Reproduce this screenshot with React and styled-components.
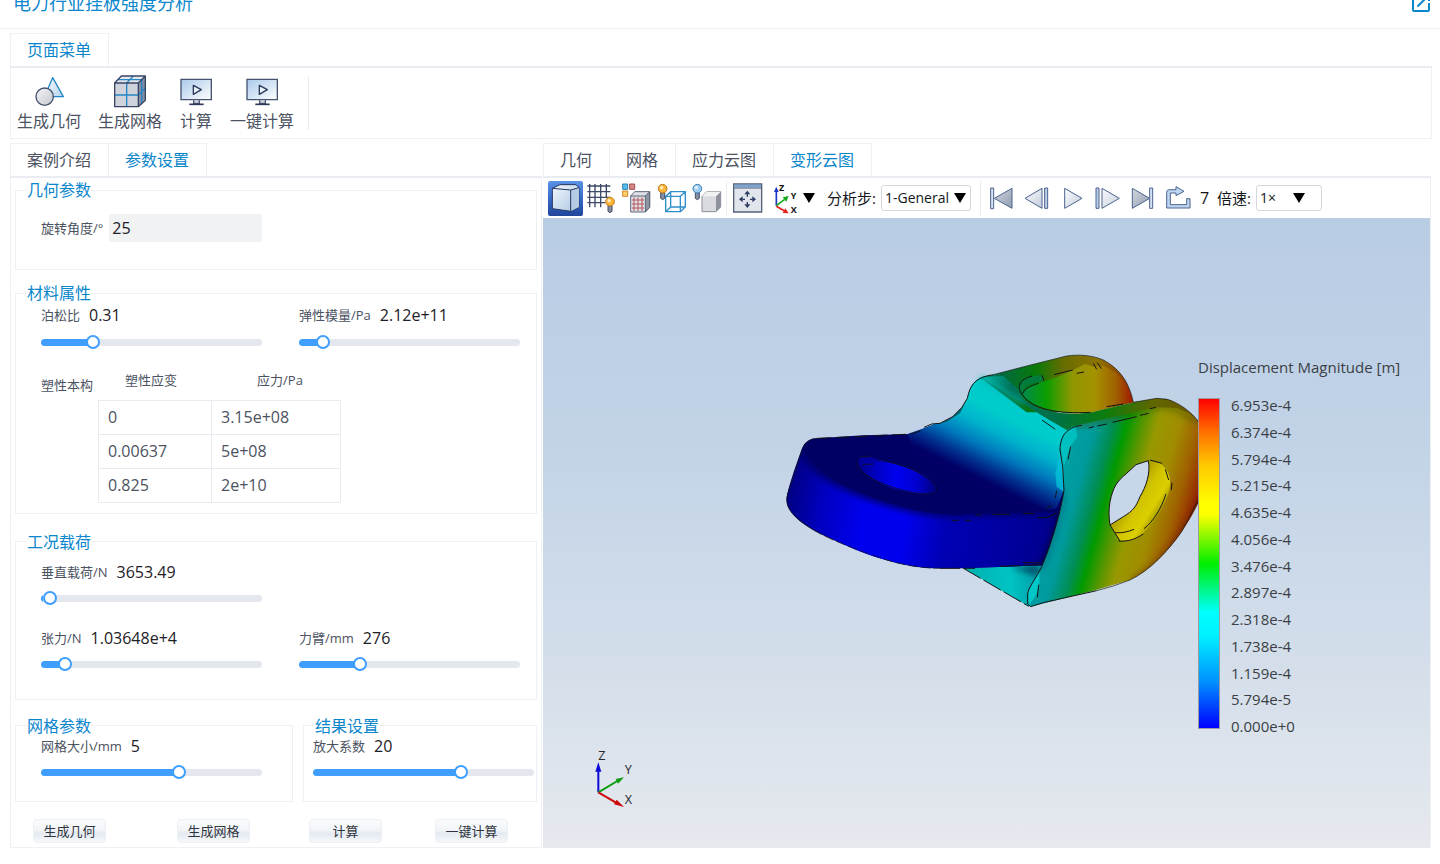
import React, { useId, useState } from "react";
import styled, { createGlobalStyle, css } from "styled-components";

const BLUE = "#0a86cc";
const LINE = "#eef0f4";
const INK = "#4b5261";

const GlobalStyle = createGlobalStyle`
  *, *::before, *::after { box-sizing: border-box; }
  body {
    margin: 0;
    background: #fff;
    color: ${INK};
    font-family: "Open Sans", "Noto Sans CJK SC", sans-serif;
    font-size: 16px;
    line-height: 20px;
  }
  button, input, select { font: inherit; color: inherit; }
  svg { display: block; flex: none; }
`;

const Page = styled.div`
  min-width: 1340px;
`;

const Header = styled.header`
  display: flex;
  align-items: center;
  justify-content: space-between;
  height: 51px;
  margin-top: -22px;
  padding: 0 7px 0 13px;
  border-bottom: 1px solid ${LINE};
  color: ${BLUE};
`;

const Title = styled.h1`
  margin: 0;
  font-size: 18px;
  font-weight: 400;
`;

const OpenLink = styled.a`
  color: inherit;
`;

const Content = styled.div`
  display: flex;
  flex-direction: column;
  gap: 4px;
  padding: 4px 8px 16px 10px;
`;

const TabStrip = styled.div`
  display: flex;
  height: 35px;
  border-bottom: 2px solid #ebecf2;
`;

const Tab = styled.button`
  padding: 0 17px 0 16px;
  border: 1px solid ${LINE};
  border-width: 1px 1px 0 0;
  background: #fff;
  color: ${(p) => (p.$active ? BLUE : INK)};
  white-space: nowrap;
  cursor: pointer;
  &:first-child { border-left-width: 1px; }
`;

const RibbonBody = styled.div`
  display: flex;
  gap: 14px;
  height: 71px;
  padding: 6px 6px 0;
  border: 1px solid ${LINE};
  border-top: 0;
`;

const RibbonItems = styled.div`
  display: flex;
  align-items: flex-start;
  gap: 17px;
`;

const RibbonItem = styled.button`
  display: flex;
  flex-direction: column;
  align-items: center;
  padding: 0;
  border: 0;
  background: none;
  line-height: 26px;
  cursor: pointer;
`;

const RibbonRule = styled.span`
  width: 1px;
  height: 54px;
  margin-top: 2px;
  background: #e8ebf0;
`;

const Main = styled.main`
  display: flex;
  gap: 1px;
  padding-right: 1px;
`;

const SidePane = styled.section`
  flex: 0 0 532px;
  min-width: 0;
`;

const SideBody = styled.div`
  padding: 2px 4px 4px;
  border: 1px solid ${LINE};
  border-top: 0;
`;

const Group = styled.fieldset`
  min-width: 0;
  margin: 0 0 ${(p) => p.$after}px;
  padding: 0;
  border: 1px solid ${LINE};
`;

const GroupName = styled.legend`
  margin-left: 11px;
  padding: 0;
  color: ${BLUE};
`;

const GroupBody = styled.div`
  padding: ${(p) => p.$pad};
`;

const GroupRow = styled.div`
  display: grid;
  grid-template-columns: 278px minmax(0, 1fr);
  gap: 10px;
`;

const SliderGrid = styled.div`
  display: grid;
  grid-template-columns: repeat(2, 221px);
  gap: 21px 37px;
`;

const FieldName = styled.label`
  font-size: 13px;
`;

const Caption = styled.div`
  display: flex;
  align-items: center;
  gap: 9px;
  white-space: nowrap;
`;

const Value = styled.output`
  color: #1d2026;
`;

const AngleRow = styled.div`
  display: flex;
  align-items: center;
  gap: 6px;
`;

const AngleInput = styled.input`
  width: 153px;
  height: 28px;
  padding: 0 3px;
  border: 0;
  border-radius: 2px;
  background: #f1f2f4;
  color: #1d2026;
`;

const thumb = css`
  width: 14px;
  height: 14px;
  border: 2px solid #409eff;
  border-radius: 50%;
  background: #fff;
`;

const Range = styled.input`
  display: block;
  width: 221px;
  height: 16px;
  margin: 9px 0 0;
  appearance: none;
  background: none;
  cursor: pointer;
  &::-webkit-slider-runnable-track {
    height: 7px;
    border-radius: 4px;
    background: linear-gradient(to right, #409eff var(--fill), #e4e7ed var(--fill));
  }
  &::-webkit-slider-thumb {
    appearance: none;
    margin-top: -4px;
    ${thumb}
  }
`;

const CurveRow = styled.div`
  display: flex;
  margin-top: 20px;
`;

const CurveName = styled.span`
  width: 57px;
  padding-top: 5px;
  font-size: 13px;
`;

const CurveTable = styled.table`
  border-collapse: collapse;
  table-layout: fixed;
  width: 242px;
`;

const CurveHead = styled.th`
  width: ${(p) => p.$w}px;
  height: 30px;
  padding: ${(p) => p.$pad};
  font-size: 13px;
  font-weight: 400;
  vertical-align: top;
`;

const CurveCell = styled.td`
  height: 34px;
  padding: 0 9px;
  border: 1px solid #e9ebf1;
`;

const Actions = styled.div`
  display: grid;
  grid-template-columns: 24fr 22fr 21fr 17fr;
  padding-left: 18px;
`;

const Action = styled.button`
  width: 73px;
  height: 24px;
  padding: 0;
  border: 1px solid #eceff4;
  border-radius: 4px;
  background: linear-gradient(#fafbfc, #f2f5f8 45%, #e4eaf2 60%, #f5f7fa);
  color: #30343c;
  font-size: 13px;
  cursor: pointer;
`;

const ViewPane = styled.section`
  display: flex;
  flex: 1;
  flex-direction: column;
  min-width: 0;
`;

const ViewBody = styled.div`
  display: flex;
  flex: 1;
  flex-direction: column;
  border-right: 1px solid ${LINE};
`;

const Toolbar = styled.div`
  display: flex;
  align-items: center;
  height: 40px;
  padding-left: 5px;
  color: #14161a;
  white-space: nowrap;
`;

const Tool = styled.button`
  width: 35px;
  height: 35px;
  padding: 0;
  border: 0;
  border-radius: 2px;
  background: ${(p) => (p.$on ? "linear-gradient(#5b93e6, #3367c4 55%, #1f449a)" : "none")};
  cursor: pointer;
`;

const AxisTool = styled.button`
  display: flex;
  align-items: center;
  gap: 4px;
  padding: 0 4px 0 8px;
  border: 0;
  background: none;
  cursor: pointer;
`;

const ToolRule = styled.span`
  width: 1px;
  height: 34px;
  margin: ${(p) => (p.$wide ? "0 4px 0 9px" : "0 3px")};
  background: #ececef;
`;

const ToolLabel = styled.label`
  margin: 0 5px 0 8px;
  font-size: 15px;
`;

const Frame = styled.span`
  margin-left: 5px;
`;

const Picker = styled.span`
  display: grid;
  align-items: center;
  width: ${(p) => p.$w}px;
  & > * { grid-area: 1 / 1; }
  & > svg {
    justify-self: end;
    margin-right: ${(p) => p.$caret}px;
    pointer-events: none;
  }
`;

const Select = styled.select`
  width: 100%;
  height: 26px;
  padding: 0 3px;
  border: 1px solid #d6d7da;
  border-radius: 3px;
  appearance: none;
  background: #fff;
  font-size: 14px;
`;

const Viewport = styled.div`
  position: relative;
  flex: 1;
  overflow: hidden;
  background: linear-gradient(#b8cce4, #c2d3e7 35%, #d3deea 70%, #e6e9ee);
`;

const Model = styled.svg`
  position: absolute;
  left: 237px;
  top: 122px;
`;

const Triad = styled.svg`
  position: absolute;
  left: 47px;
  bottom: 38px;
`;

const Scale = styled.div`
  position: absolute;
  left: 655px;
  top: 139px;
  color: #3b3f45;
  font-size: 15px;
`;

const ScaleBody = styled.div`
  display: flex;
  gap: 11px;
  height: 341px;
  margin-top: 18px;
`;

const ScaleBar = styled.div`
  width: 22px;
  height: 331px;
  margin-top: 3px;
  border: 1px solid #9a9aa0;
  background: linear-gradient(#f00, #ff7000 10%, #ffc800 20%, #ff0 32%, #ff0 35%, #0e0 50%, #0ff 65%, #00f0ff 72%, #0090ff 86%, #00f);
`;

const ScaleList = styled.ul`
  display: flex;
  flex-direction: column;
  justify-content: space-between;
  margin: 0;
  padding: 0;
  list-style: none;
`;

const Caret = () => (
  <svg width="12" height="10" viewBox="0 0 12 10"><path d="M0 0H12L6 10Z" fill="#000" /></svg>
);

function GeometryIcon() {
  return (
    <svg width="34" height="34" viewBox="96 221 102 102">
      <defs>
        <linearGradient id="geoTri" x1="0" y1="0" x2="1" y2="1"><stop offset="0" stopColor="#fff" /><stop offset="1" stopColor="#b3d3ef" /></linearGradient>
        <linearGradient id="geoBall" x1="0" y1="0" x2="1" y2="1"><stop offset="0" stopColor="#f4f4f6" /><stop offset="1" stopColor="#c4c8d0" /></linearGradient>
      </defs>
      <path d="M158 232L190 289H133Z" fill="url(#geoTri)" stroke="#2486c4" strokeWidth="4" strokeLinejoin="round" />
      <circle cx="134" cy="289" r="26" fill="url(#geoBall)" stroke="#44506e" strokeWidth="4" />
    </svg>
  );
}

function MeshIcon() {
  return (
    <svg width="34" height="34" viewBox="337 221 102 102">
      <path d="M342 248L362 227H434L413 248Z" fill="#e4e7ec" />
      <path d="M413 248L434 227V300L413 319Z" fill="#858ea2" />
      <path d="M342 248H413V319H342Z" fill="#ced3dc" />
      <path d="M342 284H413L434 263M378 319V248L398 227M352 238H423V310" fill="none" stroke="#2486c4" strokeWidth="4" />
      <path d="M342 319V248L362 227H434V300L413 319ZM342 248H413V319M413 248L434 227" fill="none" stroke="#3a4665" strokeWidth="4" strokeLinejoin="round" />
    </svg>
  );
}

function ComputeIcon() {
  return (
    <svg width="34" height="34" viewBox="535 221 102 102">
      <defs><linearGradient id="screen" x1="0" y1="0" x2="1" y2="1"><stop offset="0" stopColor="#a9c9ea" /><stop offset="1" stopColor="#fff" /></linearGradient></defs>
      <path d="M541 237H632V298H541Z" fill="url(#screen)" stroke="#46536f" strokeWidth="4" />
      <path d="M578 255L602 268L578 282Z" fill="#e8f1fa" stroke="#2e3a5a" strokeWidth="4" strokeLinejoin="round" />
      <path d="M579 300V310H596V300" fill="#c4cad6" stroke="#46536f" strokeWidth="4" />
      <path d="M566 312H609" stroke="#2e3a5a" strokeWidth="5" />
    </svg>
  );
}

const ToolArt = ({ x, children }) => (
  <svg width="35" height="35" viewBox={`${x} 121 105 105`}>{children}</svg>
);

const Bulb = ({ x, y, glow, rim }) => (
  <g>
    <path d={`M${x - 6} ${y + 12}h12v17l-6 4l-6 -4z`} fill="#8790a3" stroke="#434d64" strokeWidth="3" />
    <circle cx={x} cy={y} r="13" fill={glow} stroke={rim} strokeWidth="3" />
    <circle cx={x - 3} cy={y - 3} r="5" fill="#fff" opacity=".75" />
  </g>
);

const viewTools = [
  { name: "shaded", on: true, art: (
    <ToolArt x={24}>
      <defs><linearGradient id="slab" x1="0" y1="0" x2="1" y2="1"><stop offset="0" stopColor="#f4f9fd" /><stop offset="1" stopColor="#a8c4e2" /></linearGradient></defs>
      <path d="M37 143L60 132H108L117 141V199L92 212L37 204Z" fill="url(#slab)" stroke="#24365f" strokeWidth="3" strokeLinejoin="round" />
      <path d="M92 148L117 141V199L92 212Z" fill="#b5cbe4" />
      <path d="M37 143L92 148L117 141M92 148V212" fill="none" stroke="#24365f" strokeWidth="3" />
    </ToolArt>
  ) },
  { name: "grid", art: (
    <ToolArt x={129}>
      <path d="M149 130V200M165 130V200M182 130V200M199 130V172M142 136H211M142 153H211M142 170H211M142 186H196" stroke="#3d4966" strokeWidth="4" />
      <Bulb x={210} y={183} glow="#ffb637" rim="#b97a22" />
    </ToolArt>
  ) },
  { name: "elements", art: (
    <ToolArt x={234}>
      <g strokeWidth="3">
        <path d="M248 130H263V146H248Z" fill="#57bde6" stroke="#2a83b5" />
        <path d="M269 130H284V146H269Z" fill="#d78a8a" stroke="#a04a4a" />
        <path d="M248 151H263V167H248Z" fill="#ffd071" stroke="#d28a20" />
        <path d="M272 166L284 153H329V200L316 214H272Z" fill="#dfe1e6" stroke="#5d6579" />
        <path d="M316 166L329 153V200L316 214Z" fill="#8f95a3" stroke="#5d6579" />
        <path d="M276 178H312M276 190H312M276 202H312M282 170V211M294 170V211M306 170V211" stroke="#b5545a" />
        <path d="M272 166H316" stroke="#5d6579" />
      </g>
    </ToolArt>
  ) },
  { name: "edges", art: (
    <ToolArt x={339}>
      <path d="M377 167H421V213H377ZM377 167L392 153H436V199L421 213M421 167L436 153M392 153V199H436M392 199L377 213" fill="none" stroke="#2f8fca" strokeWidth="4" />
      <Bulb x={368} y={144} glow="#ffb637" rim="#b97a22" />
    </ToolArt>
  ) },
  { name: "faces", art: (
    <ToolArt x={444}>
      <path d="M486 167L500 153H542V199L528 213H486Z" fill="#d9dbe0" stroke="#8a8f9b" strokeWidth="3" />
      <path d="M528 167L542 153V199L528 213Z" fill="#8e929c" />
      <path d="M486 167L500 153H542L528 167Z" fill="#f1f2f4" />
      <Bulb x={472} y={144} glow="#9dcdf0" rim="#3c7fb2" />
    </ToolArt>
  ) },
];

const fitArt = (
  <ToolArt x={570}>
    <path d="M581 130H665V214H581Z" fill="#e1e5ec" stroke="#56617b" strokeWidth="4" />
    <path d="M583 132H663V140H583Z" fill="#7ba3d4" />
    <path d="M581 142H665" stroke="#56617b" strokeWidth="3" />
    <g fill="#2b3a5f">
      <path d="M622 150L631 161H613ZM622 202L631 191H613ZM597 176L608 167V185ZM648 176L637 167V185Z" />
      <path d="M620 160H624V168H620ZM620 184H624V192H620ZM607 174H615V178H607ZM630 174H638V178H630Z" />
    </g>
  </ToolArt>
);

const steel = { stroke: "#4c6390", strokeWidth: 3, strokeLinejoin: "round" };
const playTools = [
  ["first", <g {...steel}><path d="M179 142H188V204H179Z" fill="#d5e3f3" /><path d="M243 143L190 173L243 203Z" fill="url(#steelDark)" /></g>],
  ["previous", <g {...steel}><path d="M333 143L282 173L333 203Z" fill="url(#steelLight)" /><path d="M341 142H350V203H341Z" fill="#b9cfe8" /></g>],
  ["play", <path d="M401 143L453 173L401 203Z" fill="url(#steelLight)" {...steel} />],
  ["next", <g {...steel}><path d="M495 142H504V203H495Z" fill="#b9cfe8" /><path d="M513 143L565 173L513 203Z" fill="url(#steelLight)" /></g>],
  ["last", <g {...steel}><path d="M604 143L656 173L604 203Z" fill="url(#steelDark)" /><path d="M656 142H665V203H656Z" fill="#d5e3f3" /></g>],
  ["repeat", <path d="M707 202V155Q707 147 715 147H735V138L759 152L735 165V157H718V192H767V174H777V202Z" fill="#bdd6ef" {...steel} />],
];

function AxisIcon() {
  return (
    <svg width="26" height="34" viewBox="699 118 78 102">
      <g strokeWidth="5" fill="none">
        <path d="M709 192V150" stroke="#1b34c8" />
        <path d="M709 192L734 173" stroke="#17a81c" />
        <path d="M709 194L734 208" stroke="#e4201c" />
      </g>
      <path d="M709 135L716 151H702Z" fill="#1b34c8" />
      <path d="M746 163L739 180L728 167Z" fill="#17a81c" />
      <path d="M746 215L728 214L736 200Z" fill="#e4201c" />
      <g fontFamily="Open Sans, sans-serif" fontSize="27" fontWeight="700" fill="#111">
        <text x="717" y="149">Z</text><text x="752" y="173">Y</text><text x="752" y="213">X</text>
      </g>
    </svg>
  );
}

function Bracket() {
  return (
    <Model width="430" height="280" viewBox="-540 0 1290 840" role="img" aria-label="Displacement Magnitude">
      <defs>
        <linearGradient id="plateSide" gradientUnits="userSpaceOnUse" x1="-520" y1="430" x2="290" y2="560">
          <stop offset="0" stopColor="#00007c" /><stop offset=".14" stopColor="#0000c0" /><stop offset=".3" stopColor="#0000ee" />
          <stop offset=".45" stopColor="#0000ee" /><stop offset=".6" stopColor="#0000b4" /><stop offset=".8" stopColor="#0000a2" /><stop offset="1" stopColor="#00008c" />
        </linearGradient>
        <linearGradient id="web" gradientUnits="userSpaceOnUse" x1="100" y1="210" x2="0" y2="410">
          <stop offset="0" stopColor="#00cccc" /><stop offset=".25" stopColor="#00b2cc" /><stop offset=".5" stopColor="#0078bc" />
          <stop offset=".72" stopColor="#00308e" /><stop offset=".9" stopColor="#000068" /><stop offset="1" stopColor="#000064" />
        </linearGradient>
        <linearGradient id="lugTop" gradientUnits="userSpaceOnUse" x1="70" y1="0" x2="530" y2="0">
          <stop offset="0" stopColor="#008c80" /><stop offset=".12" stopColor="#006a40" /><stop offset=".35" stopColor="#0a7a08" />
          <stop offset=".52" stopColor="#686c00" /><stop offset=".75" stopColor="#8c7400" /><stop offset="1" stopColor="#902000" />
        </linearGradient>
        <linearGradient id="lugInner" gradientUnits="userSpaceOnUse" x1="185" y1="0" x2="522" y2="0">
          <stop offset="0" stopColor="#008a50" /><stop offset=".22" stopColor="#0a9e00" /><stop offset=".45" stopColor="#909600" />
          <stop offset=".65" stopColor="#a49200" /><stop offset=".84" stopColor="#a06000" /><stop offset="1" stopColor="#a01400" />
        </linearGradient>
        <linearGradient id="shoulder" gradientUnits="userSpaceOnUse" x1="60" y1="100" x2="700" y2="260">
          <stop offset="0" stopColor="#00bcb4" /><stop offset=".15" stopColor="#007458" /><stop offset=".38" stopColor="#007048" />
          <stop offset=".6" stopColor="#0c7c0c" /><stop offset=".8" stopColor="#626600" /><stop offset="1" stopColor="#6a5600" />
        </linearGradient>
        <linearGradient id="face" gradientUnits="userSpaceOnUse" x1="289" y1="80" x2="799" y2="221">
          <stop offset="0" stopColor="#00aab0" /><stop offset=".3" stopColor="#009a9c" /><stop offset=".4" stopColor="#008e54" />
          <stop offset=".47" stopColor="#009a00" /><stop offset=".56" stopColor="#589600" /><stop offset=".64" stopColor="#989800" />
          <stop offset=".76" stopColor="#a08c00" /><stop offset=".87" stopColor="#a06000" /><stop offset=".95" stopColor="#963000" /><stop offset="1" stopColor="#800c00" />
        </linearGradient>
        <linearGradient id="bore" gradientUnits="userSpaceOnUse" x1="500" y1="430" x2="610" y2="500">
          <stop offset="0" stopColor="#948800" /><stop offset=".5" stopColor="#d2c400" /><stop offset=".8" stopColor="#dccf00" /><stop offset="1" stopColor="#a89c00" />
        </linearGradient>
        <linearGradient id="plateBore" gradientUnits="userSpaceOnUse" x1="-310" y1="0" x2="-70" y2="0">
          <stop offset="0" stopColor="#000080" /><stop offset=".25" stopColor="#0000c4" /><stop offset=".5" stopColor="#0000f0" /><stop offset=".75" stopColor="#0000d0" /><stop offset="1" stopColor="#000078" />
        </linearGradient>
        <linearGradient id="foot" gradientUnits="userSpaceOnUse" x1="20" y1="700" x2="240" y2="700">
          <stop offset="0" stopColor="#00b0b0" /><stop offset=".6" stopColor="#00c4c4" /><stop offset="1" stopColor="#009ca4" />
        </linearGradient>
        <filter id="soft" x="-20%" y="-20%" width="140%" height="140%"><feGaussianBlur stdDeviation="9" /></filter>
        <clipPath id="sideClip"><path d="M-472 325C-485 370 -515 440 -520 475C-522 505 -500 530 -440 568C-380 600 -300 640 -230 658C-170 676 -110 685 -60 685H10L240 676L262 680L330 470L290 516L-20 525C-150 520 -300 470 -400 410C-440 380 -465 350 -472 325Z" /></clipPath>
        <clipPath id="faceClip"><path d="M345 258C318 266 302 290 300 330L308 380L312 450C300 530 265 640 240 690C225 720 206 740 203 762L204 795L212 800L400 752L510 720C570 692 625 632 665 575C690 538 712 500 722 470V250L690 222L650 204L588 202Z" /></clipPath>
      </defs>

      <path d="M10 685L206 799L250 780L262 670L195 676Z" fill="url(#foot)" />
      <path d="M150 682L236 676L240 710Z" fill="#00506a" filter="url(#soft)" />

      <path d="M-520 475C-515 440 -490 370 -474 325C-465 305 -450 295 -428 295L-290 286L-145 282L-100 262L-60 250L320 440L310 516L250 676L10 685H-60C-170 685 -260 650 -360 608C-440 575 -525 530 -520 475Z" fill="#000064" />
      <path d="M-160 283L-100 262L-78 252L-55 249L-22 230L5 203L22 175C30 135 45 112 80 108L190 190L330 262L300 330L312 450L290 505L240 514L-40 510Z" fill="url(#web)" />
      <path d="M-55 249L-22 230L5 203L14 192L0 220L-40 245Z" fill="#00484c" opacity=".7" />

      <g clipPath="url(#sideClip)">
        <path d="M-530 310H340V700H-530Z" fill="url(#plateSide)" />
        <path d="M-480 318C-465 360 -430 395 -390 415C-300 470 -150 512 -50 520L300 512" fill="none" stroke="#000068" strokeWidth="22" filter="url(#soft)" />
        <path d="M308 480C295 560 270 640 235 695" fill="none" stroke="#00004a" strokeWidth="20" filter="url(#soft)" />
      </g>

      <path d="M-309 368C-300 395 -255 425 -200 445C-150 460 -100 466 -75 458C-66 452 -70 440 -78 430C-100 405 -150 385 -200 370C-240 358 -300 345 -309 368Z" fill="url(#plateBore)" />
      <path d="M-300 352L-265 350L-240 362L-262 374L-302 372Z" fill="#0000a0" opacity=".8" />

      <path d="M60 112L100 104L200 78L320 48C360 42 400 47 430 60C470 82 505 115 520 187L395 217H200Z" fill="url(#lugTop)" />
      <path d="M60 112L130 108L172 145L190 180L240 206L300 219L350 221L395 217L520 187L560 180L590 175L620 177C655 188 695 215 716 246L700 262L590 232L345 282C300 262 210 205 190 190Z" fill="url(#shoulder)" />
      <path d="M190 165C190 148 205 138 240 128L290 112L340 90L375 72L400 80L430 78C475 95 508 130 518 187L480 194L395 217L350 221C290 220 215 200 190 165Z" fill="url(#lugInner)" />
      <path d="M172 150C174 122 205 108 245 104L250 122L205 135C188 142 186 155 190 170Z" fill="#007c3c" />
      <path d="M60 112C100 145 150 165 190 190" fill="none" stroke="#00b4a8" strokeWidth="10" filter="url(#soft)" />

      <g clipPath="url(#faceClip)">
        <path d="M190 170H730V810H190Z" fill="url(#face)" />
        <path d="M350 258L590 200L640 204L718 246" fill="none" stroke="#3c5400" strokeWidth="14" opacity=".6" filter="url(#soft)" />
        <path d="M520 722C590 690 670 590 722 480" fill="none" stroke="#5a2000" strokeWidth="14" opacity=".7" filter="url(#soft)" />
        <path d="M345 255C315 268 304 290 302 330L312 378L330 320L352 290Z" fill="#00c6c4" opacity=".85" />
        <path d="M312 455C300 530 270 640 240 690" fill="none" stroke="#005c78" strokeWidth="12" opacity=".7" filter="url(#soft)" />
        <path d="M238 690C225 720 206 740 203 762L206 797L228 765L238 730Z" fill="#00c8c8" />
      </g>
      <path d="M302 335L310 375L312 455L290 440L286 400Z" fill="#00c4d8" opacity=".75" />

      <path d="M450 555C446 530 446 510 450 485C460 440 470 425 500 400L528 374L565 362L602 370L620 390C634 415 634 440 620 475C600 520 565 570 540 588L515 600L480 603L465 580Z" fill="url(#bore)" />
      <path d="M450 555C446 530 446 510 450 485C460 440 470 425 500 400L528 374L565 362C572 400 558 440 540 470C528 500 520 512 490 530Z" fill="#c7d6e8" />

      <g fill="none" stroke="#151515" strokeWidth="3">
        <path d="M-519 470C-524 505 -500 532 -440 570M-519 470L-474 330C-465 305 -450 296 -428 295" strokeWidth="2" />
        <path d="M-428 295L-145 282" strokeDasharray="42 14" />
        <path d="M-145 282L-118 272M-108 262L-85 252L-60 250L-22 230L5 203L22 175C30 135 45 118 80 108L100 104" />
        <path d="M100 104L200 78L320 48C360 42 400 47 430 60C470 82 505 115 520 187" strokeWidth="2" />
        <path d="M-440 570C-380 605 -280 640 -230 657C-170 676 -110 685 -60 685" strokeWidth="2" strokeDasharray="30 8" />
        <path d="M-60 685H45M120 679L240 674M190 668H238M10 685L206 799" strokeDasharray="60 10" />
        <path d="M-300 349H-268M-246 361C-170 370 -100 402 -72 440C-65 466 -100 464 -140 458C-220 440 -300 410 -310 370L-304 362M-294 373H-260" strokeWidth="2" />
        <path d="M-25 541H-4M14 541H34M46 525H64M98 523H150M190 520H222M232 533C260 536 278 528 290 516M260 506L275 495M286 474L290 452" />
        <path d="M190 168C166 142 178 118 216 108M188 160C196 145 210 138 236 130M190 168C220 208 290 222 392 217M246 106L252 122M282 104L338 90M350 100L372 96M400 70L410 88M412 68L424 86M246 240L286 268M440 200L490 192" />
        <path d="M366 256C318 262 300 290 300 330L308 380L312 450C300 530 265 640 240 690C225 720 206 740 203 762V792L212 800L250 788L410 752M386 264L402 260M412 258L440 252M458 247L530 230M540 226L566 220M570 206L588 202M332 320L324 358M236 734L232 772" />
        <path d="M520 187L590 175L622 178C655 188 695 215 716 246M410 752L460 738L510 720C570 692 625 632 665 575L714 482" strokeWidth="2" />
        <path d="M450 555C446 530 446 510 450 485C460 440 470 425 500 400L528 374L565 362C572 400 558 440 540 470C528 500 520 512 490 530L450 555M450 555L480 603M570 360L606 370M616 388L626 420M636 428L634 450M618 462C604 505 580 545 552 566M466 578C485 580 505 575 522 568M476 603C505 606 528 596 550 582" />
      </g>
    </Model>
  );
}

function AxisTriad() {
  return (
    <Triad width="50" height="63" viewBox="60 50 150 189">
      <g strokeWidth="6">
        <path d="M85 186V122" stroke="#0a0ad8" />
        <path d="M85 186L142 152" stroke="#0c9c10" />
        <path d="M85 186L138 217" stroke="#cc0808" />
      </g>
      <path d="M85 96L94 124H76Z" fill="#0a0ad8" />
      <path d="M162 141L144 160L137 146Z" fill="#0c9c10" />
      <path d="M162 230L132 222L140 208Z" fill="#cc0808" />
      <g fontFamily="Open Sans, sans-serif" fontSize="38" fill="#26282c">
        <text x="85" y="88">Z</text><text x="164" y="132">Y</text><text x="164" y="222">X</text>
      </g>
    </Triad>
  );
}

function SliderField({ name, value, start }) {
  const id = useId();
  const [pos, setPos] = useState(start);
  return (
    <div>
      <Caption>
        <FieldName htmlFor={id}>{name}</FieldName>
        <Value htmlFor={id}>{value}</Value>
      </Caption>
      <Range
        id={id}
        type="range"
        min="0"
        max="100"
        step="any"
        value={pos}
        onChange={(e) => setPos(Number(e.target.value))}
        style={{ "--fill": `${pos}%` }}
      />
    </div>
  );
}

const FieldGroup = ({ name, after = 0, pad, children }) => (
  <Group $after={after}>
    <GroupName>{name}</GroupName>
    <GroupBody $pad={pad}>{children}</GroupBody>
  </Group>
);

const Tabs = ({ names, active }) => (
  <TabStrip role="tablist">
    {names.map((n) => (
      <Tab key={n} type="button" role="tab" aria-selected={n === active} $active={n === active}>{n}</Tab>
    ))}
  </TabStrip>
);

const ribbon = [
  ["生成几何", <GeometryIcon />],
  ["生成网格", <MeshIcon />],
  ["计算", <ComputeIcon />],
  ["一键计算", <ComputeIcon />],
];

const curve = [["0", "3.15e+08"], ["0.00637", "5e+08"], ["0.825", "2e+10"]];

const ticks = [
  "6.953e-4", "6.374e-4", "5.794e-4", "5.215e-4", "4.635e-4", "4.056e-4", "3.476e-4",
  "2.897e-4", "2.318e-4", "1.738e-4", "1.159e-4", "5.794e-5", "0.000e+0",
];

export default function App() {
  return (
    <Page>
      <GlobalStyle />
      <Header>
        <Title>电力行业挂板强度分析</Title>
        <OpenLink href="#" aria-label="open">
          <svg width="24" height="24" viewBox="0 0 24 24" fill="currentColor">
            <path d="M19 19H5V5h7V3H5a2 2 0 0 0-2 2v14a2 2 0 0 0 2 2h14a2 2 0 0 0 2-2v-7h-2zM14 3v2h3.59l-9.83 9.83 1.41 1.41L19 6.41V10h2V3z" />
          </svg>
        </OpenLink>
      </Header>
      <Content>
        <div>
          <Tabs names={["页面菜单"]} active="页面菜单" />
          <RibbonBody>
            <RibbonItems>
              {ribbon.map(([name, icon]) => (
                <RibbonItem key={name} type="button">{icon}{name}</RibbonItem>
              ))}
            </RibbonItems>
            <RibbonRule />
          </RibbonBody>
        </div>
        <Main>
          <SidePane>
            <Tabs names={["案例介绍", "参数设置"]} active="参数设置" />
            <SideBody>
              <FieldGroup name="几何参数" after={13} pad="14px 25px 27px">
                <AngleRow>
                  <FieldName htmlFor="angle">旋转角度/°</FieldName>
                  <AngleInput id="angle" defaultValue="25" />
                </AngleRow>
              </FieldGroup>
              <FieldGroup name="材料属性" after={18} pad="2px 15px 10px 25px">
                <SliderGrid>
                  <SliderField name="泊松比" value="0.31" start={21.5} />
                  <SliderField name="弹性模量/Pa" value="2.12e+11" start={8} />
                </SliderGrid>
                <CurveRow>
                  <CurveName id="curve">塑性本构</CurveName>
                  <CurveTable aria-labelledby="curve">
                    <thead>
                      <tr>
                        <CurveHead $w={113} $pad="0 8px 0 0">塑性应变</CurveHead>
                        <CurveHead $w={129} $pad="0 0 0 8px">应力/Pa</CurveHead>
                      </tr>
                    </thead>
                    <tbody>
                      {curve.map(([strain, stress]) => (
                        <tr key={strain}><CurveCell>{strain}</CurveCell><CurveCell>{stress}</CurveCell></tr>
                      ))}
                    </tbody>
                  </CurveTable>
                </CurveRow>
              </FieldGroup>
              <FieldGroup name="工况载荷" after={16} pad="10px 15px 26px 25px">
                <SliderGrid>
                  <SliderField name="垂直载荷/N" value="3653.49" start={1} />
                  <span />
                  <SliderField name="张力/N" value="1.03648e+4" start={8} />
                  <SliderField name="力臂/mm" value="276" start={26} />
                </SliderGrid>
              </FieldGroup>
              <GroupRow>
                <FieldGroup name="网格参数" after={17} pad="0 25px 20px">
                  <SliderField name="网格大小/mm" value="5" start={63.5} />
                </FieldGroup>
                <FieldGroup name="结果设置" after={17} pad="0 2px 20px 9px">
                  <SliderField name="放大系数" value="20" start={68} />
                </FieldGroup>
              </GroupRow>
              <Actions>
                {ribbon.map(([name]) => <Action key={name} type="button">{name}</Action>)}
              </Actions>
            </SideBody>
          </SidePane>
          <ViewPane>
            <Tabs names={["几何", "网格", "应力云图", "变形云图"]} active="变形云图" />
            <ViewBody>
              <Toolbar>
                {viewTools.map((t) => <Tool key={t.name} type="button" aria-label={t.name} $on={t.on}>{t.art}</Tool>)}
                <ToolRule />
                <Tool type="button" aria-label="fit">{fitArt}</Tool>
                <AxisTool type="button" aria-label="axis"><AxisIcon /><Caret /></AxisTool>
                <ToolLabel htmlFor="step">分析步:</ToolLabel>
                <Picker $w={90} $caret={5}>
                  <Select id="step"><option>1-General</option></Select>
                  <Caret />
                </Picker>
                <ToolRule $wide />
                <svg width="0" height="0">
                  <defs>
                    <linearGradient id="steelDark" x1="0" y1="0" x2="1" y2="1"><stop offset="0" stopColor="#d4d9e0" /><stop offset="1" stopColor="#8f9bb0" /></linearGradient>
                    <linearGradient id="steelLight" x1="0" y1="0" x2="1" y2="1"><stop offset="0" stopColor="#fafbfd" /><stop offset="1" stopColor="#c5cedb" /></linearGradient>
                  </defs>
                </svg>
                {playTools.map(([name, art], i) => (
                  <Tool key={name} type="button" aria-label={name}><ToolArt x={162 + 105 * i}>{art}</ToolArt></Tool>
                ))}
                <Frame>7</Frame>
                <ToolLabel htmlFor="speed">倍速:</ToolLabel>
                <Picker $w={66} $caret={17}>
                  <Select id="speed"><option>1×</option></Select>
                  <Caret />
                </Picker>
              </Toolbar>
              <Viewport>
                <Bracket />
                <Scale>
                  <div>Displacement Magnitude [m]</div>
                  <ScaleBody>
                    <ScaleBar />
                    <ScaleList>{ticks.map((t) => <li key={t}>{t}</li>)}</ScaleList>
                  </ScaleBody>
                </Scale>
                <AxisTriad />
              </Viewport>
            </ViewBody>
          </ViewPane>
        </Main>
      </Content>
    </Page>
  );
}
